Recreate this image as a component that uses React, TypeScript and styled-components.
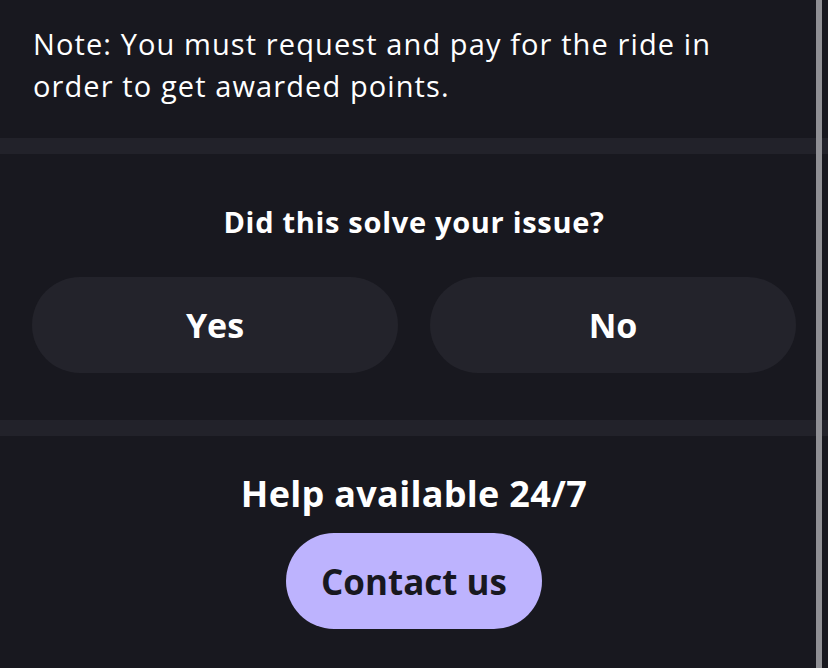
import styled, { createGlobalStyle } from "styled-components";

const GlobalStyle = createGlobalStyle`
  html, body {
    margin: 0;
    padding: 0;
    background: #18181f;
  }
  body {
    font-family: "Open Sans", Lato, sans-serif;
    color: #ffffff;
  }
`;

const Page = styled.div`
  position: relative;
  width: 828px;
  height: 668px;
  overflow: hidden;
  background: #18181f;
`;

const Scrollbar = styled.div`
  position: absolute;
  top: 0;
  right: 6px;
  width: 6px;
  height: 100%;
  background: #8f8f94;
`;

const NoteSection = styled.section`
  height: 138px;
  box-sizing: border-box;
  padding: 23px 33px 0;
`;

const NoteText = styled.p`
  margin: 0;
  font-size: 29px;
  line-height: 42px;
  letter-spacing: 1.1px;
  font-weight: 400;
  color: #ffffff;
  max-width: 730px;
`;

const Band = styled.div`
  height: 16px;
  background: #22222a;
`;

const FeedbackSection = styled.section`
  height: 266px;
  box-sizing: border-box;
  padding: 48px 32px 0;
  display: flex;
  flex-direction: column;
  align-items: center;
`;

const Question = styled.h2`
  margin: 0;
  font-size: 29px;
  line-height: 40px;
  letter-spacing: 0.7px;
  font-weight: 700;
`;

const Choices = styled.div`
  margin-top: 35px;
  width: 100%;
  display: grid;
  grid-template-columns: 1fr 1fr;
  gap: 32px;
`;

const ChoiceButton = styled.button`
  height: 96px;
  border: none;
  border-radius: 48px;
  background: #23232b;
  color: #ffffff;
  font-family: inherit;
  font-size: 34px;
  font-weight: 700;
  cursor: pointer;
`;

const HelpSection = styled.section`
  padding-top: 34px;
  display: flex;
  flex-direction: column;
  align-items: center;
`;

const HelpTitle = styled.h2`
  margin: 0;
  font-size: 36px;
  line-height: 48px;
  letter-spacing: 0.3px;
  font-weight: 700;
`;

const ContactButton = styled.button`
  margin-top: 15px;
  width: 256px;
  height: 96px;
  border: none;
  border-radius: 48px;
  background: #bdb3fe;
  color: #18181f;
  font-family: inherit;
  font-size: 35px;
  font-weight: 700;
  cursor: pointer;
`;

export default function App() {
  return (
    <Page>
      <GlobalStyle />
      <NoteSection>
        <NoteText>
          Note: You must request and pay for the ride in order to get awarded points.
        </NoteText>
      </NoteSection>
      <Band />
      <FeedbackSection>
        <Question>Did this solve your issue?</Question>
        <Choices>
          <ChoiceButton>Yes</ChoiceButton>
          <ChoiceButton>No</ChoiceButton>
        </Choices>
      </FeedbackSection>
      <Band />
      <HelpSection>
        <HelpTitle>Help available 24/7</HelpTitle>
        <ContactButton>Contact us</ContactButton>
      </HelpSection>
      <Scrollbar />
    </Page>
  );
}
